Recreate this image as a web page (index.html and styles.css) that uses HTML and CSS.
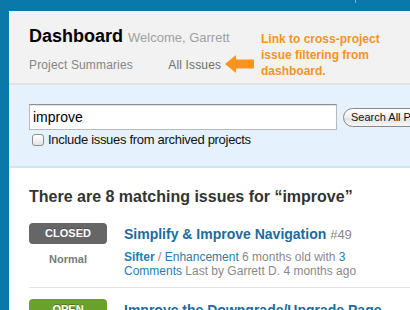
FILE: index.html
```html
<!DOCTYPE html>
<html>
<head>
	<meta charset="utf-8">
	<title>Dashboard</title>
	<link rel="stylesheet" href="styles.css">
</head>
<body>
	<div class="topbar"><span class="tick"></span></div>
	<div class="layout">
		<div class="rail"></div>
		<div class="main">
			<div class="header">
				<h1 class="title">Dashboard <span class="welcome">Welcome, Garrett</span></h1>
				<div class="nav">
					<a href="#">Project Summaries</a>
					<a href="#" class="current">All Issues</a>
				</div>
				<!-- annotation -->
				<div class="callout">
					<svg class="arrow" width="29" height="18" viewBox="0 0 29 18"><polygon points="0,9 11,0 11,4.5 29,4.5 29,13.5 11,13.5 11,18" fill="#f7931e"/></svg>
					<p>Link to cross-project<br>issue filtering from<br>dashboard.</p>
				</div>
			</div>

			<form class="search">
				<div class="search-row">
					<input type="text" class="query" value="improve">
					<button type="button" class="search-btn">Search All Projects</button>
				</div>
				<label class="archived"><input type="checkbox"> Include issues from archived projects</label>
			</form>

			<div class="results">
				<h2>There are 8 matching issues for “improve”</h2>
				<ul class="issues">
					<li>
						<div class="state">
							<div class="badge closed">CLOSED</div>
							<div class="priority">Normal</div>
						</div>
						<div class="body">
							<div class="issue-title"><a href="#">Simplify &amp; Improve Navigation</a> <span class="num">#49</span></div>
							<div class="meta"><a href="#"><b>Sifter</b></a> / <a href="#">Enhancement</a> 6 months old with <a href="#">3 Comments</a> Last by Garrett D. 4 months ago</div>
						</div>
					</li>
					<li>
						<div class="state">
							<div class="badge open">OPEN</div>
							<div class="priority">Normal</div>
						</div>
						<div class="body">
							<div class="issue-title"><a href="#">Improve the Downgrade/Upgrade Page</a> <span class="num">#31</span></div>
							<div class="meta"><a href="#"><b>Sifter</b></a> / <a href="#">Enhancement</a> 7 months old with <a href="#">2 Comments</a></div>
						</div>
					</li>
				</ul>
			</div>
		</div>
	</div>
</body>
</html>
```

FILE: styles.css
```css
html, body{
	margin:0;
	padding:0;
	overflow:hidden;
	background:#fff;
	font-family:"Liberation Sans", Arial, sans-serif;
}
a{
	text-decoration:none;
}
.topbar{
	height:11px;
	background:#0a79a9;
}
.tick{
	display:block;
	width:1px;
	height:3px;
	margin-left:355px;
	background:#6db6e0;
}
.layout{
	display:flex;
	min-height:299px;
}
.rail{
	width:9px;
	flex:none;
	background:#0a79a9;
}
.main{
	flex:1;
	min-width:0;
	overflow:hidden;
}

/* header */
.header{
	position:relative;
	background:#f2f2f2;
	padding:14px 0 10px 20px;
	border-bottom:2px solid #e2e2e2;
}
.title{
	margin:0;
	font-size:18px;
	line-height:22px;
	color:#000;
	white-space:nowrap;
}
.welcome{
	font-size:13px;
	font-weight:normal;
	color:#a0a0a0;
}
.nav{
	margin-top:8px;
	font-size:12px;
	line-height:16px;
	white-space:nowrap;
}
.nav a{
	color:#858585;
	letter-spacing:0.15px;
	margin-right:32px;
}
.nav a.current{
	color:#6e6e6e;
}
.callout{
	position:absolute;
	left:216px;
	top:20px;
	display:flex;
	align-items:flex-start;
}
.arrow{
	margin-top:24px;
	margin-right:7px;
}
.callout p{
	margin:0;
	font-size:12px;
	font-weight:bold;
	line-height:16px;
	color:#f7931e;
	white-space:nowrap;
}

/* search */
.search{
	margin:0;
	background:#e5f1fc;
	padding:19px 0 18px 20px;
	border-bottom:2px solid #cfe5f7;
}
.search-row{
	display:flex;
	align-items:center;
	white-space:nowrap;
}
.query{
	box-sizing:border-box;
	width:308px;
	height:26px;
	flex:none;
	margin:0;
	padding:0 3px;
	border:1px solid #b9b9b9;
	border-top-color:#8f8f8f;
	box-shadow:inset 0 1px 1px rgba(0,0,0,.12);
	font-family:"Liberation Sans", Arial, sans-serif;
	font-size:14px;
	color:#000;
	background:#fff;
	outline:none;
}
.search-btn{
	flex:none;
	margin-left:6px;
	height:19px;
	padding:0 9px 0 7px;
	border:1px solid #8a8a8a;
	border-radius:10px;
	background:linear-gradient(#ffffff, #f0f0f0 50%, #e2e2e2 51%, #f6f6f6);
	font-family:"Liberation Sans", Arial, sans-serif;
	font-size:11px;
	color:#111;
	line-height:17px;
}
.archived{
	display:flex;
	align-items:center;
	margin-top:2px;
	font-size:13px;
	letter-spacing:-0.3px;
	line-height:16px;
	color:#111;
	white-space:nowrap;
}
.archived input{
	-webkit-appearance:none;
	appearance:none;
	width:12px;
	height:12px;
	margin:0 4px 0 3px;
	border:1px solid #8c8c8c;
	border-radius:3px;
	background:linear-gradient(#ffffff, #e4e4e4);
	box-sizing:border-box;
}

/* results */
.results{
	padding:19px 0 0 20px;
}
.results h2{
	margin:0 0 5px;
	font-size:16px;
	line-height:20px;
	color:#333;
	white-space:nowrap;
}
.issues{
	margin:0;
	padding:0;
	list-style:none;
}
.issues li{
	display:flex;
	padding:11px 0 9px;
	border-bottom:1px solid #e3e3e3;
}
.state{
	width:78px;
	flex:none;
	margin-right:17px;
}
.badge{
	height:21px;
	line-height:21px;
	border-radius:4px;
	text-align:center;
	font-size:11px;
	font-weight:bold;
	color:#fff;
	text-shadow:0 -1px 0 rgba(0,0,0,.25);
}
.badge.closed{
	background:#666;
}
.badge.open{
	background:#6aa12b;
}
.priority{
	margin-top:8px;
	font-size:11px;
	font-weight:bold;
	line-height:14px;
	color:#7a7a7a;
	text-align:center;
}
.body{
	width:272px;
	flex:none;
	padding-top:2px;
}
.issue-title{
	font-size:14px;
	line-height:18px;
	font-weight:bold;
}
.issue-title a{
	color:#1d6b9d;
}
.num{
	font-size:13px;
	font-weight:normal;
	color:#888;
}
.meta{
	margin-top:6px;
	font-size:12px;
	line-height:14px;
	color:#8a8a8a;
}
.meta a{
	color:#2a7bb0;
}
```
